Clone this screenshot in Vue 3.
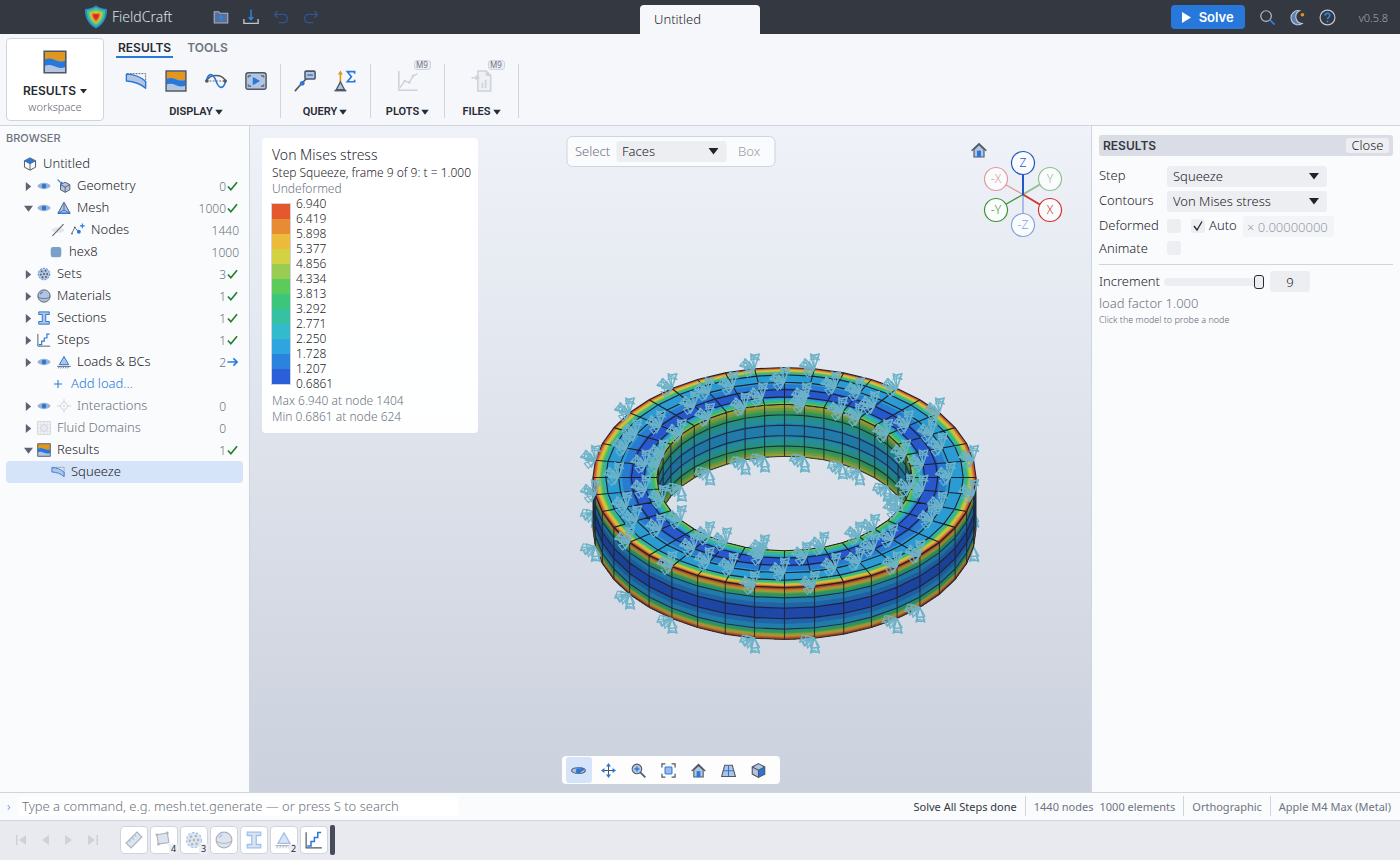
<script setup>
import { ref } from 'vue'

const groups = [
  { label: 'DISPLAY', items: ['deform', 'contour', 'wave', 'film'] },
  { label: 'QUERY', items: ['probe', 'sum'] },
  { label: 'PLOTS', items: ['plot'], soon: true },
  { label: 'FILES', items: ['export'], soon: true },
]

const tree = [
  { label: 'Untitled', icon: 'cube', kind: 'root' },
  { label: 'Geometry', icon: 'geom', arrow: 'right', eye: true, count: '0', mark: 'check' },
  { label: 'Mesh', icon: 'mesh', arrow: 'down', eye: true, count: '1000', mark: 'check' },
  { label: 'Nodes', icon: 'nodes', kind: 'child', hidden: true, count: '1440' },
  { label: 'hex8', icon: 'swatch', kind: 'child', count: '1000' },
  { label: 'Sets', icon: 'sets', arrow: 'right', count: '3', mark: 'check' },
  { label: 'Materials', icon: 'ball', arrow: 'right', count: '1', mark: 'check' },
  { label: 'Sections', icon: 'beam', arrow: 'right', count: '1', mark: 'check' },
  { label: 'Steps', icon: 'steps', arrow: 'right', count: '1', mark: 'check' },
  { label: 'Loads & BCs', icon: 'load', arrow: 'right', eye: true, count: '2', mark: 'go' },
  { label: 'Add load…', icon: 'plus', kind: 'child', link: true },
  { label: 'Interactions', icon: 'target', arrow: 'right', eye: true, count: '0', mark: 'none', dim: true },
  { label: 'Fluid Domains', icon: 'fluid', arrow: 'right', count: '0', mark: 'none', dim: true },
  { label: 'Results', icon: 'contour', arrow: 'down', count: '1', mark: 'check' },
  { label: 'Squeeze', icon: 'deform', kind: 'child', selected: true },
]

const palette = ['#e5572f', '#e88b35', '#edbb3b', '#d3d244', '#99cc52', '#5ccb5c', '#3cc67c', '#36c1a3', '#33bbcd', '#2fa5e0', '#2c83dd', '#2b5ed9']
const ticks = ['6.940', '6.419', '5.898', '5.377', '4.856', '4.334', '3.813', '3.292', '2.771', '2.250', '1.728', '1.207', '0.6861']

const viewTools = ['orbit', 'pan', 'zoomin', 'fit', 'home', 'persp', 'solid']
const timeline = [
  { icon: 'ruler' }, { icon: 'partition', n: 4 }, { icon: 'sets', n: 3 }, { icon: 'ball' },
  { icon: 'beam' }, { icon: 'load', n: 2 }, { icon: 'steps', current: true },
]

const step = ref('Squeeze')
const contours = ref('Von Mises stress')
const pick = ref('Faces')
const increment = ref(9)
const scale = ref('× 0.00000000')
const command = ref('')

/* Ring mesh: 40 sectors, 5 radial and 5 axial elements, isometric view */
const CX = 534.5, CY = 351.5, TILT = 0.5745, RI = 127.5, RO = 191.5, H = 52, N = 40
const pt = (r, k, z = 0) => {
  const a = (k * 2 * Math.PI) / N
  return [CX + r * Math.sin(a), CY + r * TILT * Math.cos(a) + z]
}
const str = (ps) => 'M' + ps.map((p) => p[0].toFixed(1) + ' ' + p[1].toFixed(1)).join('L')
const range = (a, b) => Array.from({ length: b - a + 1 }, (_, i) => a + i)
const ring = (r) => str(range(0, N - 1).map((k) => pt(r, k))) + 'Z'
const colour = (v) => palette[Math.min(11, Math.max(0, Math.floor((1 - v) * 12)))]
const sample = (values, t) => {
  const i = Math.min(values.length - 2, Math.floor(t))
  return values[i] + (values[i + 1] - values[i]) * (t - i)
}
const steps = range(0, 59).map((i) => i / 12)

const topValues = [0.66, 0.06, 0.06, 0.21, 0.22, 1.06]
const topBands = steps.slice().reverse().map((t) => ({
  d: ring(RI + ((RO - RI) * (t + 1 / 12)) / 5),
  fill: colour(sample(topValues, t + 1 / 24)),
}))
const wall = (r, from, to, values) => steps.map((t) => ({
  d: str([...range(from, to).map((k) => pt(r, k, (H * t) / 5)), ...range(from, to).reverse().map((k) => pt(r, k, H))]) + 'Z',
  fill: colour(sample(values, t + 1 / 24)),
}))
const outerBands = wall(RO, -10, 10, [1.06, 0.26, 0.06, 0.06, 0.26, 1.06])
const innerBands = wall(RI, 10, 30, [0.78, 0.42, 0.22, 0.22, 0.42, 0.76])
const shade = (r, from, to, mid) => range(from, to - 1).map((k) => ({
  d: str([pt(r, k), pt(r, k + 1), pt(r, k + 1, H), pt(r, k, H)]) + 'Z',
  o: 0.26 + 0.2 * Math.pow(Math.abs(k + 0.5 - mid) / 10, 2),
}))
const outerShade = shade(RO, -10, 10, 0)
const innerShade = shade(RI, 10, 30, 20)
const wallLines = (r, from, to) =>
  range(0, 5).map((j) => str(range(from, to).map((k) => pt(r, k, (H * j) / 5)))).join('') +
  range(from, to).map((k) => str([pt(r, k), pt(r, k, H)])).join('')
const outerLines = wallLines(RO, -10, 10)
const innerLines = wallLines(RI, 10, 30)
const topLines = range(0, 5).map((j) => ring(RI + ((RO - RI) * j) / 5)).join('') +
  range(0, N - 1).map((k) => str([pt(RI, k), pt(RO, k)])).join('')
const topClip = ring(RO) + ring(RI)

const node = (j, k, z) => pt(RI + ((RO - RI) * j) / 5, k, z)
const mirror = (ks) => ks.flatMap((k) => [k, -k, 20 - k, k - 20])
const topSupports = [
  ...[1, -1, 4, -4, 5, -6, 9, -9, 11, -11, 14, -14, 16, -16, 19, -19].map((k) => node(5, k)),
  ...mirror([2, 3, 7, 8]).map((k) => node(3, k)),
  ...[0, 10, 20, 30].map((k) => node(3, k)),
  ...[4, -4, 5, -6, 14, -14, 16, -16].map((k) => node(2, k)),
  ...mirror([1, 9]).map((k) => node(1, k)),
  ...[-1, 2, -3, 4, -4, 5, -6, 7, -8, 9, 12, -12, 14, -14, 16, -16, 17, -18, 19, -11].map((k) => node(0, k)),
]
const lowSupports = [1, -1, 4, -4, 5, -6, -9].map((k) => node(5, k, H))
const holeSupports = [19, -19, 17, -18, 16, -16, 14, -14, 13].map((k) => node(0, k, H))
/* Supports at the silhouette are partly covered by the ring */
const behindSupports = [9, 11, -11].map((k) => node(5, k, H))
</script>

<template>
  <div class="app">
    <svg class="defs" aria-hidden="true">
      <symbol id="i-logo" viewBox="0 0 24 24"><path d="M12 .5C15 2.600 19 3.800 23 4c.2 8-2.800 15-11 19.500C3.800 19 .8 12 1 4 5 3.800 9 2.600 12 .5z" fill="#2a8fc4" /><path d="M12 2.500c3 1.700 6 2.400 9 2.700 0 7-2.500 12.500-9 16.300C5.500 17.700 3 12.200 3 5.200c3-.3 6-1 9-2.700z" fill="#3fbf9a" /><path d="m12 5 7 2c-.3 5.500-2.500 9.500-7 12.500C7.500 16.500 5.300 12.500 5 7z" fill="#9ccc48" /><path d="m12 7 5 1c0 4-2 7.500-5 9.500C9 15.500 7 12 7 8z" fill="#f0b436" /><path d="M8 8.500h8c0 3.500-1.500 6-4 8-2.500-2-4-4.500-4-8z" fill="#e8582a" /><path d="M9.500 9.500h5c0 2-1 3.500-2.500 5-1.500-1.500-2.500-3-2.500-5z" fill="#cf2a1e" /></symbol>
      <symbol id="i-folder" viewBox="0 0 24 24"><path d="M3 5h6l1.500 2H21v13H3z" fill="#54709e" stroke="#aab2c0" stroke-width="1.500" /><path d="M12 17v-6.500M9.500 13 12 10.500l2.500 2.500" fill="none" stroke="#2f86ee" stroke-width="2" /></symbol>
      <symbol id="i-save" viewBox="0 0 24 24"><path d="M2.500 14.500v6h19v-6" fill="none" stroke="#c0c5ce" stroke-width="1.800" /><path d="M12 2v13M9 12l3 3.500 3-3.500" fill="none" stroke="#2f86ee" stroke-width="1.800" /></symbol>
      <symbol id="i-undo" viewBox="0 0 24 24"><path d="m7.500 4-4 4.500 4 4.500M3.500 8.500H15c3.500 0 5.500 2 5.500 5.500s-2 5.500-5.500 5.500H8.500" fill="none" stroke="#2d5791" stroke-width="1.700" /></symbol>
      <symbol id="i-redo" viewBox="0 0 24 24"><path d="m16.500 4 4 4.500-4 4.500M20.500 8.500H9C5.500 8.500 3.500 10.500 3.500 14s2 5.500 5.500 5.500h6.500" fill="none" stroke="#2d5791" stroke-width="1.700" /></symbol>
      <symbol id="i-search" viewBox="0 0 24 24"><circle cx="10" cy="10" r="7.500" fill="none" stroke="#b6bcc8" stroke-width="1.700" /><path d="m15.500 15.500 6.500 6.500" stroke="#2f86ee" stroke-width="2.200" /></symbol>
      <symbol id="i-moon" viewBox="0 0 24 24"><path d="M15 2.500A10 10 0 1 0 18.500 20.500 9.500 9.500 0 0 1 15 2.500z" fill="#5e80b4" stroke="#c3c9d4" stroke-width="1.500" /><circle cx="19" cy="8" r="2.500" fill="#e0961f" /></symbol>
      <symbol id="i-help" viewBox="0 0 24 24"><circle cx="12" cy="12" r="10.500" fill="none" stroke="#c3c9d4" stroke-width="1.600" /><path d="M8.700 9.500c0-4.500 6.600-4.500 6.600-.3 0 2.500-3.300 2.500-3.300 5.300" fill="none" stroke="#2f86ee" stroke-width="2.200" /><circle cx="12" cy="17.500" r="1.400" fill="#2f86ee" /></symbol>

      <symbol id="i-contour" viewBox="0 0 24 24"><path d="M1.500 1.500h21v21h-21z" fill="#b3c4e0" /><path d="M1.500 1.500h21v9c-4 2-7 1-11-.5s-7-1-10-.5z" fill="#e0961f" /><path d="M1.500 9.500c4-1.500 7-1 10.500.5s6.500 2 10.500.5V17c-4 1.500-7 1-10.500-.5s-6.500-2-10.500-.8z" fill="#2878dc" /><path d="M1.200 1.200h21.600v21.600H1.200z" fill="none" stroke="#4f5866" stroke-width="1.600" /></symbol>
      <symbol id="i-deform" viewBox="0 0 24 24"><path d="M2 4h20.500v14" fill="none" stroke="#4f5866" stroke-dasharray="2 1.200" /><path d="M1.500 4.500c8 0 15 2.500 21 8v7.500c-6-5.500-13-7.500-21-8z" fill="#b3c4e0" stroke="#2878dc" stroke-width="1.500" stroke-linejoin="round" /></symbol>
      <symbol id="i-wave" viewBox="0 0 24 24"><path d="M1.500 12h21" stroke="#4f5866" stroke-dasharray="2 1.500" /><path d="M1.500 12c4-8 17-8 21 0" fill="none" stroke="#4f5866" stroke-width="1.500" /><path d="M1.500 12c2-9 7-9.500 10.500 0s8.500 9 10.500 0" fill="none" stroke="#2878dc" stroke-width="1.700" /><circle cx="2" cy="12" r="2" fill="#4f5866" /><circle cx="22" cy="12" r="2" fill="#4f5866" /></symbol>
      <symbol id="i-film" viewBox="0 0 24 24"><rect x="1" y="3" width="22" height="18" rx="2.500" fill="#b3c4e0" stroke="#4f5866" stroke-width="1.600" /><path d="M8.500 7.500v9l8-4.500z" fill="#2878dc" /><path d="M3.500 6.500h3M3.500 17.500h3M20.500 6.500h-3M20.500 17.500h-3" stroke="#4f5866" stroke-width="1.400" /><path d="M3.500 6.500v2M3.500 15.500v2M20.500 6.500v2M20.500 15.500v2" stroke="#4f5866" /></symbol>
      <symbol id="i-probe" viewBox="0 0 24 24"><path d="M1 23 8 15l6-6" fill="none" stroke="#4f5866" stroke-width="1.800" /><circle cx="9" cy="14.500" r="2.600" fill="#2878dc" /><rect x="12" y="1.200" width="11" height="8.600" rx="1.200" fill="#b3c4e0" stroke="#4f5866" stroke-width="1.700" /><path d="M14.500 5.500h6" stroke="#2878dc" stroke-width="1.600" /></symbol>
      <symbol id="i-sum" viewBox="0 0 24 24"><path d="M7 14V4" stroke="#e0961f" stroke-width="1.800" /><path d="M7 .5 4.300 5h5.400z" fill="#e0961f" /><path d="m7 13-4.500 8.500h9z" fill="#b3c4e0" stroke="#4f5866" stroke-width="1.400" /><path d="M.5 22.500h13" stroke="#4f5866" stroke-width="1.700" /><path d="M22.500 4V1.800h-8l4.500 5.500-4.500 5.500h8v-2.200" fill="none" stroke="#2878dc" stroke-width="1.800" /></symbol>
      <symbol id="i-plot" viewBox="0 0 24 24"><path d="M2 1v21h20.500" fill="none" stroke="#cdd2dc" stroke-width="1.700" /><path d="m3 19.500 5.500-7.500 5 1.500 4-7L22.500 4" fill="none" stroke="#cdd2dc" stroke-width="1.600" /><circle cx="8.500" cy="12" r="1.500" fill="#cdd2dc" /><circle cx="13.500" cy="13.500" r="1.500" fill="#cdd2dc" /><circle cx="17.500" cy="6.500" r="1.500" fill="#cdd2dc" /></symbol>
      <symbol id="i-export" viewBox="0 0 24 24"><path d="M7.500 1h9l5 5v17h-14z" fill="#eef0f4" stroke="#cdd2dc" stroke-width="1.700" /><path d="M16.500 1v5h5z" fill="#cdd2dc" stroke="#cdd2dc" /><path d="M.5 8.500h6" stroke="#cdd2dc" stroke-width="1.600" /><path d="M5 5.500v6l5-3z" fill="#cdd2dc" /><path d="M12.500 19.500V14M16 19.500v-9" stroke="#cdd2dc" stroke-width="1.800" /></symbol>

      <symbol id="i-cube" viewBox="0 0 24 24"><path d="m12 1.500 9.500 5v11l-9.500 5-9.500-5v-11z" fill="#fafbfd" stroke="#4f5866" stroke-width="1.700" /><path d="m12 1.500 9.500 5-9.500 5-9.500-5z" fill="#2878dc" /><path d="m2.500 6.500 9.500 5 9.500-5M12 11.500v11" fill="none" stroke="#4f5866" stroke-width="1.500" /></symbol>
      <symbol id="i-geom" viewBox="0 0 24 24"><path d="m14 5.500 8 4.200v8.800l-8 4.300-8-4.300V9.700z" fill="#b3c4e0" stroke="#4f5866" stroke-width="1.600" /><path d="m6 9.700 8 4.300 8-4.300M14 14v8.800" fill="none" stroke="#4f5866" stroke-width="1.500" /><path d="m1 1 4.500 4.500" stroke="#2878dc" stroke-width="2" /><circle cx="7.500" cy="7" r="2.300" fill="#2878dc" /></symbol>
      <symbol id="i-mesh" viewBox="0 0 24 24"><path d="M12 2 22.500 21h-21z" fill="#b3c4e0" stroke="#4f5866" stroke-width="1.600" /><path d="M12 3v12.500M12 15.500 2 21M12 15.500 22 21M1.500 21h21" fill="none" stroke="#2878dc" stroke-width="1.700" /></symbol>
      <symbol id="i-nodes" viewBox="0 0 24 24"><path d="m1.500 17.500 5-10 7 8.500" fill="none" stroke="#4f5866" stroke-width="1.400" /><circle cx="1.700" cy="18" r="1.500" fill="#4f5866" /><circle cx="6.500" cy="7.500" r="1.400" fill="#4f5866" /><circle cx="13.500" cy="15" r="3.300" fill="#2878dc" /><path d="M19.500 1v8M15.500 5h8" stroke="#2878dc" stroke-width="1.900" /></symbol>
      <symbol id="i-swatch" viewBox="0 0 24 24"><rect x="3" y="3.500" width="18" height="17.500" rx="4" fill="#7a9fc8" /></symbol>
      <symbol id="i-sets" viewBox="0 0 24 24"><circle cx="12" cy="12" r="10" fill="#b3c4e0" stroke="#2878dc" stroke-width="1.400" stroke-dasharray="3.500 2" /><g fill="#4f5866"><circle cx="8" cy="7.500" r="1.600" /><circle cx="14.500" cy="6.500" r="1.600" /><circle cx="17.500" cy="12" r="1.600" /><circle cx="6.500" cy="13" r="1.600" /><circle cx="12" cy="12" r="1.600" /><circle cx="9.500" cy="17.500" r="1.600" /><circle cx="15.500" cy="17" r="1.600" /></g></symbol>
      <symbol id="i-ball" viewBox="0 0 24 24"><circle cx="12" cy="12" r="10.500" fill="#b3c4e0" stroke="#4f5866" stroke-width="1.600" /><path d="M2 13.500c5 4 15 4 20 0" fill="none" stroke="#4f5866" stroke-width="1.300" /><path d="M5.500 9c1-2 2.500-3.200 4.500-3.800" fill="none" stroke="#2878dc" stroke-width="1.800" /></symbol>
      <symbol id="i-beam" viewBox="0 0 24 24"><path d="M3 1.500h18V6h-6v12h6v4.500H3V18h6V6H3z" fill="#b3c4e0" stroke="#2878dc" stroke-width="1.700" /></symbol>
      <symbol id="i-steps" viewBox="0 0 24 24"><path d="M1.500 1.500v21h21" fill="none" stroke="#4f5866" stroke-width="1.600" /><path d="M3 20h5v-6h4.500V8.500H17V2h4.500" fill="none" stroke="#2878dc" stroke-width="2" /></symbol>
      <symbol id="i-load" viewBox="0 0 24 24"><path d="M12 2.500 20 16.500H4z" fill="#b3c4e0" stroke="#2878dc" stroke-width="1.700" /><path d="M.5 19.500h23" stroke="#4f5866" stroke-width="1.500" /><path d="m2 23 2-3m2 3 2-3m2 3 2-3m2 3 2-3m2 3 2-3" stroke="#4f5866" stroke-width="1.300" /></symbol>
      <symbol id="i-plus" viewBox="0 0 24 24"><path d="M12 5v14M5 12h14" stroke="#2878dc" stroke-width="1.800" /></symbol>
      <symbol id="i-target" viewBox="0 0 24 24"><g fill="none" stroke="#cdd2dc" stroke-width="1.600"><circle cx="12" cy="12" r="6" /><path d="M12 0v6M12 18v6M0 12h6M18 12h6" /></g><circle cx="12" cy="12" r="1.700" fill="#cdd2dc" /></symbol>
      <symbol id="i-fluid" viewBox="0 0 24 24"><path d="M1 1h22v22H1z" fill="#f1f3f7" stroke="#cfd3dc" stroke-width="1.600" /><path d="M1 6.500h22M1 12h22M1 17.500h22M6.500 1v22M12 1v22M17.500 1v22" stroke="#d8dbe3" /><circle cx="12" cy="12" r="5.500" fill="#e9ecf2" stroke="#cfd3dc" stroke-width="1.500" /></symbol>
      <symbol id="i-eye" viewBox="0 0 24 24"><path d="M.5 12C5 4.800 19 4.800 23.500 12 19 19.200 5 19.200.5 12z" fill="#9eb2d2" /><circle cx="12" cy="12" r="4" fill="#2878dc" /></symbol>
      <symbol id="i-noeye" viewBox="0 0 24 24"><path d="M.5 12C5 5.500 19 5.500 23.500 12 19 18.500 5 18.500.5 12z" fill="#e3e6ea" /><path d="M2.500 22 21.500 2" stroke="#5c6370" stroke-width="1.800" /></symbol>

      <symbol id="i-orbit" viewBox="0 0 24 24"><ellipse cx="12" cy="12" rx="11" ry="4.500" fill="#b3c4e0" stroke="#4f5866" stroke-width="1.700" /><circle cx="12" cy="12.500" r="4.300" fill="#2878dc" /><path d="M15.500 6v8l6-3z" fill="#2878dc" /></symbol>
      <symbol id="i-pan" viewBox="0 0 24 24"><path d="M12 4v16M4 12h16" stroke="#4f5866" stroke-width="1.700" /><path d="m12 0 4 5.500H8zM12 24l-4-5.500h8zM0 12l5.500-4v8zM24 12l-5.500 4V8z" fill="#2878dc" /></symbol>
      <symbol id="i-zoomin" viewBox="0 0 24 24"><circle cx="9.500" cy="9.500" r="7.700" fill="#b3c4e0" stroke="#4f5866" stroke-width="1.700" /><path d="m15 15 8 8" stroke="#4f5866" stroke-width="2.700" /><path d="M9.500 5.500v8M5.500 9.500h8" stroke="#2878dc" stroke-width="2.200" /></symbol>
      <symbol id="i-fit" viewBox="0 0 24 24"><path d="M1.500 7V1.500H7M17 1.500h5.500V7M22.500 17v5.500H17M7 22.500H1.500V17" fill="none" stroke="#4f5866" stroke-width="2" /><rect x="6.500" y="6.500" width="11" height="11" rx="1" fill="#9dbbe6" stroke="#2878dc" stroke-width="1.700" /></symbol>
      <symbol id="i-home" viewBox="0 0 24 24"><path d="M4.500 11v11.500h15V11L12 4z" fill="#b3c4e0" stroke="#4f5866" stroke-width="1.700" /><path d="M1 13 12 2.500 23 13" fill="none" stroke="#4f5866" stroke-width="2.200" /><path d="M9 22.500V13h6v9.500z" fill="#2878dc" /></symbol>
      <symbol id="i-persp" viewBox="0 0 24 24"><path d="M6 3.500h12l5 18H1z" fill="#b3c4e0" stroke="#4f5866" stroke-width="1.800" /><path d="M12 4v17M4 12.500h16" stroke="#2878dc" stroke-width="1.700" /></symbol>
      <symbol id="i-solid" viewBox="0 0 24 24"><path d="m12 1 10 5.300v11.400L12 23 2 17.700V6.300z" fill="#b3c4e0" /><path d="m12 11.500 10-5.200v11.400L12 23z" fill="#2878dc" /><path d="m12 1 10 5.300v11.400L12 23 2 17.700V6.300zM2 6.300l10 5.200 10-5.200M12 11.500V23" fill="none" stroke="#4f5866" stroke-width="1.800" /></symbol>
      <symbol id="i-ruler" viewBox="0 0 24 24"><path d="M1.500 16 16 1.500l6.500 6.500L8 22.500z" fill="#b3c4e0" stroke="#4f5866" stroke-width="1.500" /><path d="m5.500 12 2.500 2.500M9 8.500l3 3M12.500 5 15 7.500" stroke="#2878dc" stroke-width="1.400" /></symbol>
      <symbol id="i-partition" viewBox="0 0 24 24"><path d="m2.500 5 14-2.500 2 13-14 2z" fill="#b3c4e0" stroke="#4f5866" stroke-width="1.500" /><g fill="#4f5866"><circle cx="2.500" cy="5" r="1.700" /><circle cx="16.500" cy="2.500" r="1.700" /><circle cx="4.500" cy="17.500" r="1.700" /></g><path d="m23.500 23-5-5M23.500 17v7" stroke="#2878dc" stroke-width="2" /></symbol>

      <symbol id="i-down" viewBox="0 0 10 8"><path d="M0 1h10L5 7.500z" fill="currentColor" /></symbol>
      <symbol id="i-right" viewBox="0 0 10 10"><path d="M2 0v10l6-5z" fill="currentColor" /></symbol>
      <symbol id="i-check" viewBox="0 0 12 12"><path d="m1 6.500 3.200 3.500L11 2" fill="none" stroke="currentColor" stroke-width="1.800" /></symbol>
      <symbol id="i-go" viewBox="0 0 12 12"><path d="M.5 6h10M7 2l4 4-4 4" fill="none" stroke="currentColor" stroke-width="1.700" /></symbol>
      <symbol id="i-fan" viewBox="-18 -18 26 30" overflow="visible">
        <g fill="none" stroke="#6cb2c8" stroke-width="1.200" stroke-linejoin="round">
          <path d="M0 0-4-13 5-15zM0 0-1-12 3-11zM-4-15l4 2 5-2-2 4 2 2-5-1-4 1 2-3z" />
          <path d="M0 0-15-3-9-10zM0 0-11-7-10 0zM-15-3l4-1 1-6 2 4 1 4-5 0z" />
          <path d="M0 0-11 3-7 8zM0 0-9-1-4 7z" />
        </g>
        <path d="M0 0-8-6-5-8zM0 0-10-2-8-4z" fill="#6cb2c8" />
      </symbol>
      <symbol id="i-fanlow" viewBox="-18 -18 26 36" overflow="visible">
        <g fill="none" stroke="#6cb2c8" stroke-width="1.200" stroke-linejoin="round">
          <path d="M0 0-4 14 5 14zM0 0 5 9-3 10zM-4 15l4-3 5 3-2-4 2-2-5 1-4-1 2 3z" />
          <path d="M0 0-15 4-12-3zM0 0-14 1-10 8zM-15 4l4-1 1 5 2-4" />
          <path d="M0 0-9-3-7 10z" />
        </g>
        <path d="M0 0-8 5-9 2zM0 0-5 8-3 9z" fill="#6cb2c8" />
      </symbol>
    </svg>

    <header class="titlebar">
      <div class="brand-side">
        <svg class="logo"><use href="#i-logo" /></svg>
        <h1>FieldCraft</h1>
        <nav class="file-tools">
          <button aria-label="Open"><svg><use href="#i-folder" /></svg></button>
          <button aria-label="Save"><svg><use href="#i-save" /></svg></button>
          <button aria-label="Undo"><svg><use href="#i-undo" /></svg></button>
          <button aria-label="Redo"><svg><use href="#i-redo" /></svg></button>
        </nav>
      </div>
      <button class="doc-tab">Untitled</button>
      <div class="action-side">
        <button class="solve"><svg viewBox="0 0 10 12"><path d="M0 0v12l10-6z" fill="#fff" /></svg>Solve</button>
        <button class="round" aria-label="Search"><svg><use href="#i-search" /></svg></button>
        <button class="round" aria-label="Theme"><svg><use href="#i-moon" /></svg></button>
        <button class="round" aria-label="Help"><svg><use href="#i-help" /></svg></button>
        <span class="version">v0.5.8</span>
      </div>
    </header>

    <section class="ribbon">
      <button class="workspace">
        <svg class="ws-icon"><use href="#i-contour" /></svg>
        <span class="ws-name">RESULTS <svg><use href="#i-down" /></svg></span>
        <span class="ws-sub">workspace</span>
      </button>
      <div class="ribbon-body">
        <nav class="tabs"><button class="on">RESULTS</button><button>TOOLS</button></nav>
        <div class="groups">
          <div v-for="g in groups" :key="g.label" class="group" :class="{ single: g.soon }">
            <div class="group-icons">
              <button v-for="i in g.items" :key="i" :aria-label="i">
                <svg><use :href="'#i-' + i" /></svg>
                <span v-if="g.soon" class="badge">M9</span>
              </button>
            </div>
            <button class="group-label">{{ g.label }}<svg><use href="#i-down" /></svg></button>
          </div>
        </div>
      </div>
    </section>

    <main class="work">
      <aside class="browser">
        <h2>BROWSER</h2>
        <ul>
          <li v-for="r in tree" :key="r.label" :class="[r.kind, r.icon, { selected: r.selected, dim: r.dim, link: r.link }]">
            <svg v-if="r.arrow" class="arrow"><use :href="'#i-' + r.arrow" /></svg>
            <svg v-if="r.eye" class="ico"><use href="#i-eye" /></svg>
            <svg v-if="r.hidden" class="ico"><use href="#i-noeye" /></svg>
            <svg class="ico"><use :href="'#i-' + r.icon" /></svg>
            <span class="name">{{ r.label }}</span>
            <span class="count">{{ r.count }}</span>
            <svg v-if="r.mark" class="mark" :class="r.mark"><use v-if="r.mark !== 'none'" :href="'#i-' + r.mark" /></svg>
          </li>
        </ul>
      </aside>

      <section class="viewport">
        <svg class="model" viewBox="0 0 841 666" role="img" aria-label="Ring model">
          <clipPath id="top-clip"><path :d="topClip" clip-rule="evenodd" /></clipPath>
          <use v-for="(p, i) in behindSupports" :key="'c' + i" href="#i-fanlow" :x="p[0] - 18" :y="p[1] - 18" width="26" height="36" />
          <path v-for="(b, i) in innerBands" :key="'i' + i" :d="b.d" :fill="b.fill" />
          <path v-for="(s, i) in innerShade" :key="'is' + i" :d="s.d" :fill-opacity="s.o" fill="#000b18" />
          <path :d="innerLines" class="edge wall" />
          <path v-for="(b, i) in outerBands" :key="'o' + i" :d="b.d" :fill="b.fill" />
          <path v-for="(s, i) in outerShade" :key="'os' + i" :d="s.d" :fill-opacity="s.o" fill="#000b18" />
          <path :d="outerLines" class="edge wall" />
          <g clip-path="url(#top-clip)">
            <path v-for="(b, i) in topBands" :key="'t' + i" :d="b.d" :fill="b.fill" />
          </g>
          <path :d="topClip" fill="#000b18" fill-opacity=".06" fill-rule="evenodd" />
          <path :d="topLines" class="edge" />
          <use v-for="(p, i) in topSupports" :key="'a' + i" href="#i-fan" :x="p[0] - 18" :y="p[1] - 18" width="26" height="30" />
          <use v-for="(p, i) in [...lowSupports, ...holeSupports]" :key="'b' + i" href="#i-fanlow" :x="p[0] - 18" :y="p[1] - 18" width="26" height="36" />
        </svg>

        <div class="legend">
          <h3>Von Mises stress</h3>
          <p class="strong">Step Squeeze, frame 9 of 9: t = 1.000</p>
          <p>Undeformed</p>
          <div class="scale">
            <div class="bars"><i v-for="c in palette" :key="c" :style="{ background: c }"></i></div>
            <ol><li v-for="t in ticks" :key="t">{{ t }}</li></ol>
          </div>
          <p>Max 6.940 at node 1404</p>
          <p>Min 0.6861 at node 624</p>
        </div>

        <div class="pickbar">
          <label for="pick">Select</label>
          <span class="select pick"><select id="pick" v-model="pick"><option>Faces</option></select><svg><use href="#i-down" /></svg></span>
          <button>Box</button>
        </div>

        <button class="home" aria-label="Home view"><svg><use href="#i-home" /></svg></button>
        <svg class="gizmo" viewBox="0 0 90 96" role="img" aria-label="View axes">
          <g stroke-linecap="round">
            <path d="M45 48.500 18 33" stroke="#e09a9c" stroke-width="1.300" />
            <path d="M45 48.500 71 33" stroke="#8fbf90" stroke-width="2" />
            <path d="M45 48.500V79" stroke="#86a3dd" stroke-width="1.300" />
            <path d="M45 48.500 18 64" stroke="#3a9637" stroke-width="1.300" />
            <path d="M45 48.500 71 64" stroke="#d0352e" stroke-width="2" />
            <path d="M45 48.500V17" stroke="#2258c4" stroke-width="2" />
          </g>
          <g fill="#fafbfd" stroke-width="1.200">
            <circle cx="18" cy="33" r="11.500" stroke="#e09a9c" /><circle cx="72" cy="33" r="11.500" stroke="#8fbf90" />
            <circle cx="45" cy="79" r="11.500" stroke="#86a3dd" /><circle cx="18" cy="64" r="11.500" stroke="#3a9637" />
            <circle cx="72" cy="64" r="11.500" stroke="#d0352e" /><circle cx="45" cy="17" r="11.500" stroke="#2258c4" />
          </g>
          <g text-anchor="middle" font-size="12">
            <text x="18" y="37" fill="#e09a9c">-X</text><text x="72" y="37" fill="#8fbf90">Y</text>
            <text x="45" y="83" fill="#86a3dd">-Z</text><text x="18" y="68" fill="#3a9637">-Y</text>
            <text x="72" y="68" fill="#d0352e">X</text><text x="45" y="21" fill="#2258c4">Z</text>
          </g>
        </svg>

        <div class="viewtools">
          <button v-for="(v, i) in viewTools" :key="v" :class="{ on: i === 0 }" :aria-label="v"><svg><use :href="'#i-' + v" /></svg></button>
        </div>
      </section>

      <aside class="panel">
        <header><h2>RESULTS</h2><button>Close</button></header>
        <div class="form">
          <label for="step">Step</label>
          <span class="select"><select id="step" v-model="step"><option>Squeeze</option></select><svg><use href="#i-down" /></svg></span>
          <label for="contours">Contours</label>
          <span class="select"><select id="contours" v-model="contours"><option>Von Mises stress</option></select><svg><use href="#i-down" /></svg></span>
          <label for="deformed">Deformed</label>
          <div class="inline">
            <span class="tick"><input id="deformed" type="checkbox" /></span>
            <span class="tick auto"><input id="auto" type="checkbox" checked /><svg viewBox="0 0 14 14"><path d="m3 7 3 4 5-8.500" fill="none" stroke="#272b33" stroke-width="1.300" /></svg></span>
            <label for="auto">Auto</label>
            <input v-model="scale" class="scale-box" aria-label="Scale" disabled />
          </div>
          <label for="animate" class="last">Animate</label>
          <div class="inline last"><span class="tick"><input id="animate" type="checkbox" /></span></div>
        </div>
        <hr />
        <div class="inc">
          <label for="inc">Increment</label>
          <input id="inc" v-model.number="increment" type="range" min="0" max="9" />
          <input v-model.number="increment" class="num" aria-label="Increment value" />
        </div>
        <p class="factor">load factor 1.000</p>
        <p class="hint">Click the model to probe a node</p>
      </aside>
    </main>

    <footer class="status">
      <label for="cmd">›</label>
      <input id="cmd" v-model="command" placeholder="Type a command, e.g. mesh.tet.generate — or press S to search" />
      <div class="info">
        <span class="done">Solve All Steps done</span>
        <span class="counts"><span>1440 nodes</span><span>1000 elements</span></span>
        <span>Orthographic</span>
        <span>Apple M4 Max (Metal)</span>
      </div>
    </footer>

    <section class="timeline">
      <div class="transport">
        <button aria-label="First"><svg viewBox="0 0 12 12"><path d="M1 1h1.500v10H1zM11 1v10L4 6z" /></svg></button>
        <button aria-label="Previous"><svg viewBox="0 0 12 12"><path d="M10 1v10L3 6z" /></svg></button>
        <button aria-label="Next"><svg viewBox="0 0 12 12"><path d="M2 1v10l7-5z" /></svg></button>
        <button aria-label="Last"><svg viewBox="0 0 12 12"><path d="M1 1v10l7-5zM9.500 1H11v10H9.500z" /></svg></button>
      </div>
      <button v-for="t in timeline" :key="t.icon" class="op" :class="{ current: t.current }" :aria-label="t.icon">
        <svg><use :href="'#i-' + t.icon" /></svg><span v-if="t.n">{{ t.n }}</span>
      </button>
      <i class="marker"></i>
    </section>
  </div>
</template>

<style>
body { margin: 0; }
</style>

<style scoped>
.app { display: flex; flex-direction: column; min-height: 100vh; font: 13px/18px "Noto Sans", sans-serif; font-weight: 300; color: #1f232b; background: #fafbfd; }
.app * { box-sizing: border-box; }
.defs { position: absolute; width: 0; height: 0; }
button, input, select { font: inherit; color: inherit; border: 0; padding: 0; margin: 0; background: none; }
h1, h2, h3, p, ul, ol { margin: 0; padding: 0; list-style: none; font-weight: inherit; }
svg { display: block; flex: none; }

.titlebar { display: grid; grid-template-columns: 1fr 120px 1fr; height: 34px; background: #343841; }
.brand-side { display: flex; align-items: center; padding-left: 84px; color: #dfe2e8; }
.logo { width: 24px; height: 24px; }
h1 { width: 104px; padding-left: 4px; font-size: 14px; }
.file-tools { display: flex; gap: 12px; }
.file-tools svg { width: 18px; height: 18px; }
.doc-tab { align-self: end; height: 29px; padding: 0 14px 2px; text-align: left; border-radius: 4px 4px 0 0; background: #f6f7fa; }
.action-side { display: flex; align-items: center; justify-content: flex-end; padding-right: 12px; }
.solve { display: flex; align-items: center; gap: 8px; height: 24px; padding: 0 11px; margin-right: 14px; border-radius: 4px; background: #2878dc; color: #fff; font: 600 13px/18px Inter, sans-serif; }
.solve svg { width: 9px; height: 11px; }
.round { margin-right: 13px; }
.round svg { width: 17px; height: 17px; }
.version { margin-left: 10px; padding-top: 2px; font-size: 11px; color: #a3a8b1; }

.ribbon { display: flex; height: 92px; padding: 4px 6px; border-bottom: 1px solid #cfd4df; background: #f6f7fa; }
.workspace { display: flex; flex-direction: column; align-items: center; width: 98px; height: 83px; padding-top: 11px; border: 1px solid #cfd4df; border-radius: 4px; background: #fff; }
.ws-icon { width: 24px; height: 24px; }
.ws-name { display: flex; align-items: center; gap: 4px; margin-top: 9px; font: 600 12px/16px Inter, sans-serif; color: #272b33; }
.ws-name svg { width: 7px; height: 6px; }
.ws-sub { font-size: 11px; line-height: 16px; color: #5c6370; }
.ribbon-body { padding-left: 8px; }
.tabs { display: flex; gap: 12px; padding-left: 4px; height: 22px; }
.tabs button { height: 20px; padding: 2px 2px 0; border-bottom: 2px solid transparent; font: 600 12px/16px Inter, sans-serif; color: #6d7480; }
.tabs .on { border-color: #2878dc; color: #272b33; }
.groups { display: flex; margin-top: 4px; }
.group { display: flex; flex-direction: column; align-items: center; padding: 0 4px; height: 54px; border-right: 1px solid #cfd4df; }
.group:nth-child(2) { padding-right: 5px; }
.group.single { width: 74px; padding: 0; }
.group-icons { display: flex; }
.group-icons button { position: relative; display: grid; place-items: center; width: 40px; height: 34px; }
.group-icons svg { width: 22px; height: 22px; }
.badge { position: absolute; left: 26px; top: -4px; width: 17px; height: 10px; border: 1px solid #cfd4df; border-radius: 3px; background: #eceef3; font-size: 8px; font-weight: 400; line-height: 8px; text-align: center; color: #6d7480; }
.group-label { display: flex; align-items: center; gap: 2px; margin-top: 6px; font: 600 11px/16px Roboto, sans-serif; color: #272b33; }
.group-label svg { width: 8px; height: 6px; }

.work { display: flex; flex: 1; min-height: 0; }
.browser { width: 250px; padding: 4px 6px; border-right: 1px solid #cfd4df; }
.browser h2 { height: 23px; font: 500 11px/16px Inter, sans-serif; color: #6d7480; }
.browser li { display: flex; align-items: center; height: 22px; padding: 0 4px 0 18px; border-radius: 4px; }
.browser li.root { padding-left: 17px; }
.browser li.child { padding-left: 45px; }
.browser li.swatch { padding-left: 43px; }
.arrow { width: 9px; height: 9px; margin-right: 4px; color: #5c6370; }
.ico { width: 14px; height: 14px; margin-right: 6px; }
.name { flex: 1; padding-bottom: 2px; white-space: nowrap; }
.count { padding-top: 2px; font-size: 12px; color: #6d7480; }
.mark { width: 11px; height: 12px; margin: 0 1px; }
.check { color: #23802d; }
.go { color: #2878dc; }
.none { visibility: hidden; }
.dim .name { color: #6d7480; }
.link .name { color: #2878dc; }
.selected { background: #d5e4f9; }

.viewport { position: relative; flex: 1; min-width: 0; background: linear-gradient(#eff2f8, #cbd1dd); overflow: hidden; }
.model { position: absolute; inset: 0; width: 100%; height: 100%; }
.edge { fill: none; stroke: #1d222b; stroke-width: 1.1; }
.edge.wall { stroke-opacity: .85; }
.legend { position: absolute; left: 12px; top: 12px; width: 216px; padding: 8px 10px; border-radius: 4px; background: rgba(255, 255, 255, .97); font-size: 12px; line-height: 16px; color: #6d7480; white-space: nowrap; }
.legend h3 { font-size: 14px; line-height: 18px; padding-bottom: 1px; color: #272b33; }
.legend .strong { color: #1f232b; }
.scale { display: flex; gap: 5px; margin: 6px 0 8px -1px; color: #1f232b; }
.bars { width: 20px; height: 182px; border: 1px solid #cfd4df; }
.bars i { display: block; height: 15px; }
.scale ol { margin: -7px 0; }
.scale li { height: 15px; line-height: 15px; }
.pickbar { position: absolute; left: 50%; top: 10px; transform: translateX(-50%); display: flex; align-items: center; height: 31px; width: 209px; padding: 0 8px 1px; border: 1px solid #cfd4df; border-radius: 6px; background: #fafbfd; color: #6d7480; }
.pickbar label { width: 41px; }
.pickbar button { margin-left: 12px; color: #959ba6; }
.select { position: relative; display: block; width: 160px; height: 21px; color: #1f232b; }
.select.pick { width: 110px; }
.select select { appearance: none; width: 100%; height: 21px; padding: 0 6px 1px; border-radius: 3px; background: #edeef2; }
.select svg { position: absolute; right: 8px; top: 6px; width: 10px; height: 8px; pointer-events: none; }
.home { position: absolute; right: 104px; top: 16px; }
.home svg { width: 16px; height: 16px; }
.gizmo { position: absolute; right: 23px; top: 20px; width: 90px; height: 96px; }
.viewtools { position: absolute; left: 50%; bottom: 8px; transform: translateX(-50%); display: flex; gap: 4px; padding: 1px 8px 1px 4px; border-radius: 4px; background: #fdfdfe; }
.viewtools button { display: grid; place-items: center; width: 26px; height: 26px; border-radius: 3px; }
.viewtools .on { background: #d5e4f9; }
.viewtools svg { width: 15px; height: 15px; }

.panel { width: 309px; padding: 9px 7px; border-left: 1px solid #cfd4df; }
.panel header { display: flex; align-items: center; justify-content: space-between; height: 21px; padding: 0 4px; border-radius: 3px; background: #dadde6; }
.panel h2 { font: 600 12px/16px Inter, sans-serif; color: #343841; }
.panel header button { width: 43px; height: 15px; border-radius: 3px; background: #edeef2; line-height: 15px; }
.form { display: grid; grid-template-columns: 68px 1fr; align-items: start; row-gap: 4px; margin-top: 10px; }
.inline { display: flex; align-items: center; height: 21px; }
.inline.last { height: 15px; }
.form .last { line-height: 15px; }
.tick { position: relative; width: 14px; height: 14px; margin-bottom: 2px; }
.tick.auto { margin: 0 4px 2px 10px; }
.tick input { appearance: none; display: block; width: 14px; height: 14px; border-radius: 3px; background: #edeef2; }
.tick svg { position: absolute; inset: 0; width: 14px; height: 14px; pointer-events: none; }
.inline label { width: 34px; padding-bottom: 3px; }
.scale-box { width: 91px; height: 21px; padding: 0 4px; border-radius: 3px; background: #f3f4f7; color: #959ba6; }
hr { height: 1px; margin: 8px 0 6px; border: 0; background: #cfd4df; }
.inc { display: flex; align-items: center; height: 21px; }
.inc label { width: 65px; padding-bottom: 2px; }
.inc input[type="range"] { appearance: none; width: 100px; height: 8px; border-radius: 4px; background: #edeef2; }
.inc input[type="range"]::-webkit-slider-thumb { appearance: none; width: 10px; height: 14px; border: 1px solid #272b33; border-radius: 3px; background: #edeef2; }
.num { width: 40px; height: 21px; margin-left: 6px; border-radius: 3px; background: #edeef2; text-align: center; }
.factor { margin-top: 2px; color: #6d7480; }
.hint { font-size: 9px; line-height: 16px; color: #5c6370; }

.status { display: flex; align-items: center; height: 28px; padding: 0 9px 1px 7px; border-top: 1px solid #cfd4df; }
.status label { width: 11px; color: #2878dc; }
.status input { width: 440px; height: 19px; padding: 0 4px; border-radius: 3px; background: #fff; }
.status input::placeholder { color: #6d7480; opacity: 1; }
.info { display: flex; margin-left: auto; font-size: 11px; font-weight: 400; white-space: nowrap; color: #6d7480; }
.info > span { height: 20px; line-height: 22px; padding-left: 8px; margin-left: 8px; border-left: 1px solid #cfd4df; }
.info > .done { border-left: 0; color: #343841; }
.counts { display: flex; gap: 6px; }

.timeline { display: flex; align-items: center; gap: 2px; height: 40px; padding-bottom: 1px; border-top: 1px solid #cfd4df; background: #e8eaef; }
.transport { display: flex; gap: 12px; width: 118px; padding-left: 15px; }
.transport svg { width: 12px; height: 12px; fill: #ccd1da; }
.op { position: relative; display: grid; place-items: center; width: 28px; height: 28px; border: 1px solid #cfd4df; border-radius: 4px; background: #fff; }
.op svg { width: 18px; height: 18px; opacity: .45; }
.op.current svg { opacity: 1; }
.op span { position: absolute; right: -1px; bottom: -1px; width: 9px; font-size: 9px; font-weight: 400; line-height: 10px; background: #eceef3; color: #272b33; }
.marker { width: 5px; height: 30px; border-radius: 2px; background: #474c58; }
</style>
